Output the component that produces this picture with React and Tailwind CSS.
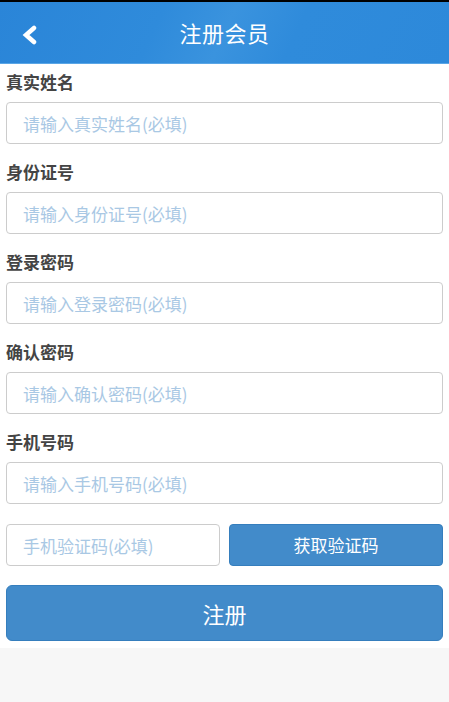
export default function App() {
  const fields = [
    { label: "真实姓名", placeholder: "请输入真实姓名(必填)" },
    { label: "身份证号", placeholder: "请输入身份证号(必填)" },
    { label: "登录密码", placeholder: "请输入登录密码(必填)", type: "password" },
    { label: "确认密码", placeholder: "请输入确认密码(必填)", type: "password" },
    { label: "手机号码", placeholder: "请输入手机号码(必填)" },
  ];

  return (
    <div
      className="min-h-[702px] bg-[#f7f7f7]"
      style={{ fontFamily: '"Noto Sans CJK SC", "Noto Sans", sans-serif' }}
    >
      <div className="h-[2px] bg-black" />
      <header className="relative h-[62px] flex items-center justify-center bg-[linear-gradient(115deg,#2a85d8_0%,#2f8bdb_35%,#3a93de_50%,#2f8bdb_65%,#2d89da_100%)] border-b border-[#5aa6e6]">
        <button className="absolute left-[20px] top-[22px] w-[20px] h-[22px] flex items-center justify-center">
          <svg width="18" height="20" viewBox="0 0 18 20">
            <polyline
              points="13,3 5,10 13,17"
              fill="none"
              stroke="#fff"
              strokeWidth="4.5"
              strokeLinecap="round"
              strokeLinejoin="miter"
            />
          </svg>
        </button>
        <h1 className="text-white text-[22px] tracking-[0.5px]">注册会员</h1>
      </header>

      <div className="bg-white px-[6px] pt-[6px] pb-[7px]">
        {fields.map((f, i) => (
          <div key={f.label} className={i > 0 ? "mt-[16px]" : ""}>
            <label className="block text-[17px] leading-[24px] font-bold text-[#444] mb-[8px]">
              {f.label}
            </label>
            <input
              type={f.type || "text"}
              placeholder={f.placeholder}
              className="w-full h-[42px] rounded-[4px] border border-[#cccccc] px-[16px] text-[17px] placeholder:text-[#a9c8e4] outline-none"
            />
          </div>
        ))}

        <div className="mt-[20px] flex gap-[9px]">
          <input
            placeholder="手机验证码(必填)"
            className="w-[214px] h-[42px] rounded-[4px] border border-[#cccccc] px-[16px] text-[17px] placeholder:text-[#a9c8e4] outline-none"
          />
          <button className="flex-1 h-[42px] rounded-[4px] border border-[#357ebd] bg-[#428bca] text-white text-[17px]">
            获取验证码
          </button>
        </div>

        <button className="mt-[19px] w-full h-[56px] rounded-[6px] border border-[#357ebd] bg-[#428bca] text-white text-[22px]">
          注册
        </button>
      </div>
    </div>
  );
}
